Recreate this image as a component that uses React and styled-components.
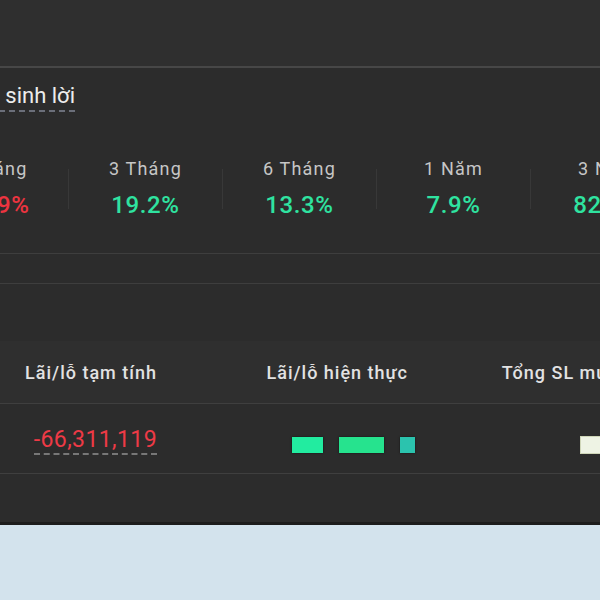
import React from 'react';
import styled, { createGlobalStyle } from 'styled-components';

const GlobalStyle = createGlobalStyle`
  html, body {
    margin: 0;
    padding: 0;
    background: #2c2c2c;
    font-family: Roboto, "Noto Sans", "Liberation Sans", sans-serif;
  }
`;

const Page = styled.div`
  width: 600px;
  height: 600px;
  overflow: hidden;
  display: flex;
  flex-direction: column;
  background: #2c2c2c;
`;

const TopBar = styled.div`
  height: 66px;
  flex-shrink: 0;
  background: #2f2f2f;
  border-bottom: 2px solid #474747;
`;

const Section = styled.section`
  margin-left: -86px;
  width: 800px;
  flex-shrink: 0;
  border-bottom: 1px solid #3e3e3e;
`;

const Title = styled.div`
  padding: 16px 0 0 0;
  height: 44px;
  box-sizing: border-box;
  display: flex;
  justify-content: flex-start;
`;

const TitleText = styled.span`
  font-size: 22px;
  color: #ececec;
  line-height: 24px;
  border-bottom: 2px dashed #6b6f7a;
  padding-bottom: 1px;
  margin-left: 15px;
  white-space: nowrap;
`;

const StatsRow = styled.div`
  display: grid;
  grid-template-columns: repeat(5, 154px);
  padding-top: 57px;
  height: 141px;
  box-sizing: border-box;
`;

const Stat = styled.div`
  display: flex;
  flex-direction: column;
  align-items: center;
  gap: 13px;
  border-left: ${p => (p.first ? 'none' : '1px solid #383838')};
  height: 40px;
`;

const StatLabel = styled.div`
  font-size: 18px;
  letter-spacing: 1.2px;
  line-height: 20px;
  color: #c6c6c6;
  margin-top: -10px;
`;

const StatValue = styled.div`
  font-size: 24px;
  font-weight: 500;
  letter-spacing: 0.6px;
  line-height: 26px;
  color: ${p => (p.down ? '#ec3440' : '#2fe3a0')};
`;

const TableSection = styled.section`
  margin-top: 29px;
  border-top: 1px solid #3e3e3e;
  flex-shrink: 0;
`;

const Table = styled.div`
  margin-top: 57px;
`;

const Row = styled.div`
  display: grid;
  grid-template-columns: 173px 251px 210px;
  align-items: center;
  height: ${p => (p.head ? '62px' : '69px')};
  background: ${p => (p.head ? '#2f2f2f' : 'transparent')};
  border-bottom: 1px solid #3f3f3f;
`;

const Cell = styled.div`
  padding-right: 16px;
  white-space: nowrap;
  font-size: ${p => (p.head ? '18px' : '23px')};
  font-weight: ${p => (p.head ? 500 : 400)};
  letter-spacing: ${p => (p.head ? '1px' : '0.4px')};
  color: ${p => (p.head ? '#e2e2e2' : '#ee3a46')};
  display: flex;
  justify-content: flex-end;
`;

const Loss = styled.span`
  border-bottom: 2px dashed #777;
  line-height: 24px;
  padding-bottom: 1px;
  margin-top: 6px;
`;

const Bars = styled.div`
  display: flex;
  gap: 16px;
  align-items: center;
  margin-right: -7px;
  margin-top: 12px;
`;

const Bar = styled.span`
  display: block;
  width: ${p => p.w}px;
  height: 16px;
  background: ${p => p.c};
  box-shadow: 0 0 2px rgba(0, 0, 0, 0.6);
`;

const Chip = styled.span`
  display: block;
  width: 20px;
  height: 16px;
  background: #eef3e4;
  border: 1px solid #cfd6b8;
  margin-right: 16px;
  margin-top: 12px;
`;

const Spacer = styled.div`
  flex: 1;
`;

const Footer = styled.div`
  height: 75px;
  flex-shrink: 0;
  background: #d3e3ed;
  border-top: 3px solid #1d1d1d;
`;

const stats = [
  { label: '1 Tháng', value: '-12.9%', down: true },
  { label: '3 Tháng', value: '19.2%' },
  { label: '6 Tháng', value: '13.3%' },
  { label: '1 Năm', value: '7.9%' },
  { label: '3 Năm', value: '82.4%' },
];

export default function App() {
  return (
    <>
      <GlobalStyle />
      <Page>
        <TopBar />
        <Section>
          <Title>
            <TitleText>Tỷ suất sinh lời</TitleText>
          </Title>
          <StatsRow>
            {stats.map((s, i) => (
              <Stat key={s.label} first={i === 0}>
                <StatLabel>{s.label}</StatLabel>
                <StatValue down={s.down}>{s.value}</StatValue>
              </Stat>
            ))}
          </StatsRow>
        </Section>
        <TableSection>
          <Table>
            <Row head>
              <Cell head>Lãi/lỗ tạm tính</Cell>
              <Cell head>Lãi/lỗ hiện thực</Cell>
              <Cell head>Tổng SL mua</Cell>
            </Row>
            <Row>
              <Cell>
                <Loss>-66,311,119</Loss>
              </Cell>
              <Cell>
                <Bars>
                  <Bar w={31} c="#22eca0" />
                  <Bar w={45} c="#26e38e" />
                  <Bar w={15} c="#2bc3ae" />
                </Bars>
              </Cell>
              <Cell>
                <Chip />
              </Cell>
            </Row>
          </Table>
        </TableSection>
        <Spacer />
        <Footer />
      </Page>
    </>
  );
}
